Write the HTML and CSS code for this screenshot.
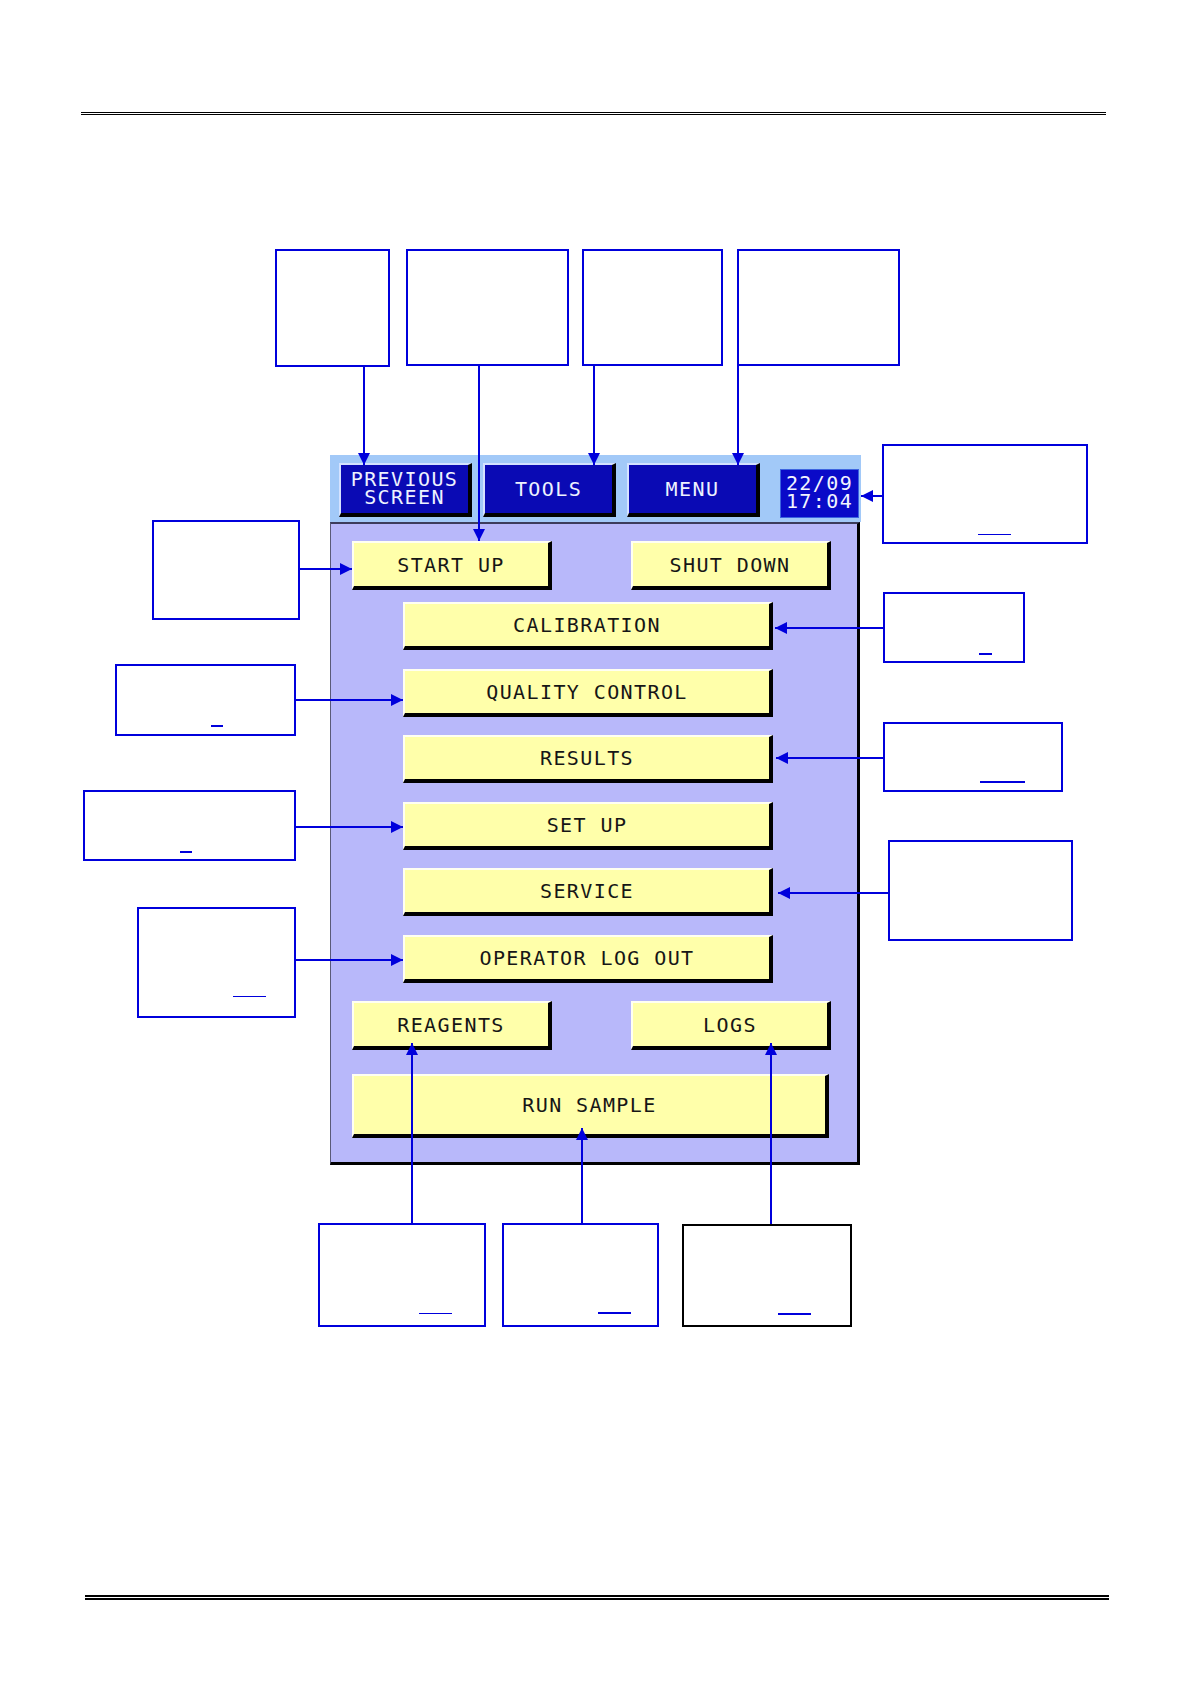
FILE: index.html
```html
<!DOCTYPE html>
<html lang="en">
<head>
    <meta charset="UTF-8">
    <title>Main Menu</title>
    <link rel="stylesheet" href="styles.css">
</head>
<body>
<div class="sheet">

    <div class="rule rule-top"></div>

    <div class="panel">
        <div class="panel-head">
            <div class="key key-blue key-two">PREVIOUS<br>SCREEN</div>
            <div class="key key-blue">TOOLS</div>
            <div class="key key-blue">MENU</div>
            <div class="clock">22/09<br>17:04</div>
        </div>
        <div class="panel-body">
            <div class="pair">
                <div class="key key-yellow key-half">START UP</div>
                <div class="key key-yellow key-half">SHUT DOWN</div>
            </div>
            <div class="key key-yellow key-mid key-cal">CALIBRATION</div>
            <div class="key key-yellow key-mid">QUALITY CONTROL</div>
            <div class="key key-yellow key-mid">RESULTS</div>
            <div class="key key-yellow key-mid">SET UP</div>
            <div class="key key-yellow key-mid">SERVICE</div>
            <div class="key key-yellow key-mid">OPERATOR LOG OUT</div>
            <div class="pair">
                <div class="key key-yellow key-half">REAGENTS</div>
                <div class="key key-yellow key-half">LOGS</div>
            </div>
            <div class="key key-yellow key-run">RUN SAMPLE</div>
        </div>
    </div>

    <div class="rule rule-bottom"></div>

    <!-- callout boxes -->
    <div class="callout call-prev"></div>
    <div class="callout call-startup-top"></div>
    <div class="callout call-tools"></div>
    <div class="callout call-menu"></div>
    <div class="callout call-clock"><span class="mark mark-thin w33"></span></div>
    <div class="callout call-startup"></div>
    <div class="callout call-cal"><span class="mark w13"></span></div>
    <div class="callout call-qc"><span class="mark w12"></span></div>
    <div class="callout call-results"><span class="mark w45"></span></div>
    <div class="callout call-setup"><span class="mark w12"></span></div>
    <div class="callout call-service"></div>
    <div class="callout call-logout"><span class="mark mark-thin w33"></span></div>
    <div class="callout call-reagents"><span class="mark mark-thin w33"></span></div>
    <div class="callout call-run"><span class="mark w33"></span></div>
    <div class="callout call-logs"><span class="mark w33"></span></div>

    <!-- connector lines -->
    <svg class="leaders" width="1191" height="1684" viewBox="0 0 1191 1684">
        <defs>
            <marker id="tip" viewBox="0 0 12 12" refX="12" refY="6" markerWidth="12" markerHeight="12"
                    markerUnits="userSpaceOnUse" orient="auto">
                <path d="M0,0 L12,6 L0,12 z" fill="#0000dc"/>
            </marker>
        </defs>
        <g stroke="#0000dc" stroke-width="2" marker-end="url(#tip)">
            <line x1="364" y1="367" x2="364" y2="465"/>
            <line x1="479" y1="366" x2="479" y2="541"/>
            <line x1="594" y1="366" x2="594" y2="465"/>
            <line x1="738" y1="366" x2="738" y2="465"/>

            <line x1="300" y1="569" x2="352" y2="569"/>
            <line x1="296" y1="700" x2="403" y2="700"/>
            <line x1="296" y1="827" x2="403" y2="827"/>
            <line x1="296" y1="960" x2="403" y2="960"/>

            <line x1="882" y1="496" x2="861" y2="496"/>
            <line x1="883" y1="628" x2="775" y2="628"/>
            <line x1="883" y1="758" x2="776" y2="758"/>
            <line x1="888" y1="893" x2="778" y2="893"/>

            <line x1="412" y1="1223" x2="412" y2="1043"/>
            <line x1="582" y1="1223" x2="582" y2="1128"/>
            <line x1="771" y1="1224" x2="771" y2="1043"/>
        </g>
    </svg>

</div>
</body>
</html>
```

FILE: styles.css
```css
body {
    margin: 0;
    font-family: "DejaVu Sans", sans-serif;
    background: #fff;
}
.sheet {
    position: relative;
    width: 1191px;
    height: 1684px;
    padding-top: 112px;
    box-sizing: border-box;
    overflow: hidden;
}

/* page rules */
.rule-top {
    height: 1px;
    margin: 0 85px 0 81px;
    border-top: 1px solid #000;
    border-bottom: 1px solid #000;
}
.rule-bottom {
    height: 1px;
    margin: 430px 82px 0 85px;
    border-top: 2px solid #000;
    border-bottom: 2px solid #000;
}

/* touch screen panel */
.panel {
    width: 531px;
    margin: 340px 0 0 330px;
}
.panel-head {
    display: flex;
    align-items: flex-start;
    gap: 11px;
    height: 67px;
    padding: 8px 0 0 9px;
    box-sizing: border-box;
    background: #a2c9f8;
}
.panel-body {
    display: flex;
    flex-direction: column;
    width: 530px;
    height: 643px;
    padding: 17px 0 0 21px;
    box-sizing: border-box;
    background: #b8b8fa;
    border-style: solid;
    border-width: 2px 3px 3px 1px;
    border-color: #3c3c5c #000 #000 #5a5a78;
}
.panel-body > * + * {
    margin-top: 18.5px;
}
.panel-body > .key-cal {
    margin-top: 12px;
}
.panel-body > .key-run {
    margin-top: 24px;
}
.pair {
    display: flex;
    justify-content: space-between;
    width: 479px;
}

.key {
    display: flex;
    align-items: center;
    justify-content: center;
    box-sizing: border-box;
    border-style: solid;
    border-width: 2px 4px 4px 2px;
    font-family: "DejaVu Sans Mono", monospace;
    font-size: 20px;
    letter-spacing: 1.4px;
    line-height: 18px;
    text-align: center;
}
.key-blue {
    width: 133px;
    height: 54px;
    background: #0a0ab4;
    border-color: #d4e2ff #000 #000 #d4e2ff;
    color: #eef2ff;
}
.key-two {
    padding-bottom: 2px;
}
.key-yellow {
    background: #ffffaa;
    border-color: #fffff2 #000 #000 #fffff2;
    color: #161616;
}
.key-half {
    width: 200px;
    height: 49px;
}
.key-mid {
    width: 370px;
    height: 48px;
    margin-left: 51px;
}
.key-run {
    width: 477px;
    height: 64px;
}

.clock {
    width: 79px;
    height: 49px;
    margin: 6px 0 0 9px;
    padding-bottom: 3px;
    display: flex;
    align-items: center;
    justify-content: center;
    box-sizing: border-box;
    background: #0a0ac8;
    border: 1px solid #3c64e0;
    color: #f2f4ff;
    font-family: "DejaVu Sans Mono", monospace;
    font-size: 20px;
    letter-spacing: 1.4px;
    line-height: 18px;
    text-align: center;
}

/* callout boxes round the panel */
.callout {
    position: absolute;
    display: flex;
    flex-direction: column;
    justify-content: flex-end;
    box-sizing: border-box;
    background: #fff;
    border: 2px solid #0000dc;
}
.mark {
    display: block;
    margin-left: 94px;
    border-bottom: 2px solid #0000dc;
}
.mark-thin {
    border-bottom-width: 1px;
}
.w12 { width: 12px; }
.w13 { width: 13px; }
.w33 { width: 33px; }
.w45 { width: 45px; }

.call-prev        { left: 275px; top: 249px; width: 115px; height: 118px; }
.call-startup-top { left: 406px; top: 249px; width: 163px; height: 117px; }
.call-tools       { left: 582px; top: 249px; width: 141px; height: 117px; }
.call-menu        { left: 737px; top: 249px; width: 163px; height: 117px; }

.call-clock   { left: 882px; top: 444px; width: 206px; height: 100px; padding-bottom: 7px; }
.call-cal     { left: 883px; top: 592px; width: 142px; height: 71px; padding-bottom: 6px; }
.call-results { left: 883px; top: 722px; width: 180px; height: 70px; padding-bottom: 7px; }
.call-results .mark { margin-left: 95px; }
.call-service { left: 888px; top: 840px; width: 185px; height: 101px; }

.call-startup { left: 152px; top: 520px; width: 148px; height: 100px; }
.call-qc      { left: 115px; top: 664px; width: 181px; height: 72px; padding-bottom: 7px; }
.call-setup   { left: 83px; top: 790px; width: 213px; height: 71px; padding-bottom: 6px; }
.call-setup .mark { margin-left: 95px; }
.call-logout  { left: 137px; top: 907px; width: 159px; height: 111px; padding-bottom: 19px; }

.call-reagents { left: 318px; top: 1223px; width: 168px; height: 104px; padding-bottom: 11px; }
.call-reagents .mark { margin-left: 99px; }
.call-run      { left: 502px; top: 1223px; width: 157px; height: 104px; padding-bottom: 11px; }
.call-logs     { left: 682px; top: 1224px; width: 170px; height: 103px; padding-bottom: 10px; border-color: #000; }

.leaders {
    position: absolute;
    left: 0;
    top: 0;
    pointer-events: none;
}
```
